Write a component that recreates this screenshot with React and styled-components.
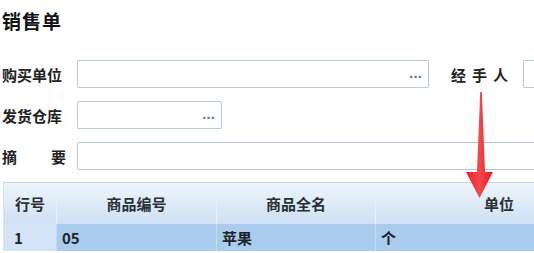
import React from "react";
import styled, { createGlobalStyle } from "styled-components";

const GlobalStyle = createGlobalStyle`
  html, body {
    margin: 0;
    padding: 0;
    background: #ffffff;
    overflow: hidden;
  }
  body {
    font-family: "Noto Sans CJK SC", "Noto Sans", sans-serif;
    color: #1f1f1f;
  }
`;

const Page = styled.div`
  position: relative;
  width: 534px;
  height: 253px;
  padding: 9px 0 0 2px;
  box-sizing: border-box;
  overflow: hidden;
`;

const Title = styled.h1`
  margin: 0;
  font-size: 19px;
  line-height: 24px;
  font-weight: 700;
  letter-spacing: 1px;
  color: #111;
`;

const Form = styled.div`
  margin-top: 27px;
  display: flex;
  flex-direction: column;
  gap: 13px;
`;

const Row = styled.div`
  display: flex;
  align-items: center;
  height: 28px;
  white-space: nowrap;
`;

const Label = styled.div`
  width: 64px;
  margin-right: 11px;
  font-size: 15px;
  font-weight: 700;
  color: #222;
  display: flex;
  justify-content: ${(p) => (p.$spread ? "space-between" : "flex-start")};
  flex-shrink: 0;
`;

const SideLabel = styled.div`
  margin: 0 9px 0 22px;
  font-size: 15px;
  font-weight: 700;
  letter-spacing: 6px;
  color: #222;
  flex-shrink: 0;
`;

const Field = styled.div`
  width: ${(p) => p.$w}px;
  height: 28px;
  box-sizing: border-box;
  border: 1px solid #b3c8d6;
  border-radius: 2px;
  background: #fff;
  display: flex;
  align-items: center;
  justify-content: flex-end;
  padding-right: 6px;
  flex-shrink: 0;
`;

const Dots = styled.span`
  font-family: "DejaVu Sans", sans-serif;
  font-size: 13px;
  font-weight: 700;
  color: #5b7fa6;
  line-height: 1;
  margin-bottom: 1px;
`;

const Table = styled.div`
  margin-top: 12px;
  margin-left: 1px;
  width: 620px;
  border-top: 1px solid #c9d4dd;
  display: grid;
  grid-template-columns: 54px 160px 159px 247px;
`;

const HeadCell = styled.div`
  height: 41px;
  display: flex;
  align-items: center;
  justify-content: center;
  font-size: 15px;
  font-weight: 700;
  color: #2a2f36;
  background: linear-gradient(#eef5fc, #cde0f2);
  border-right: 1px solid #e8f1fa;
  border-left: ${(p) => (p.$first ? "1px solid #d6e3ef" : "none")};
  box-sizing: border-box;
`;

const Cell = styled.div`
  height: 27px;
  display: flex;
  align-items: center;
  padding-left: ${(p) => (p.$first ? 10 : 5)}px;
  font-size: 15px;
  font-weight: 700;
  color: #1d2228;
  background: ${(p) => (p.$first ? "#d2e4f5" : "#aacdee")};
  border-right: 1px solid #c4dcf2;
  border-left: ${(p) => (p.$first ? "1px solid #d6e3ef" : "none")};
  box-sizing: border-box;
`;

const Arrow = styled.svg`
  position: absolute;
  left: 462px;
  top: 88px;
`;

export default function App() {
  return (
    <>
      <GlobalStyle />
      <Page>
        <Title>销售单</Title>
        <Form>
          <Row>
            <Label>购买单位</Label>
            <Field $w={352}>
              <Dots>…</Dots>
            </Field>
            <SideLabel>经手人</SideLabel>
            <Field $w={60} />
          </Row>
          <Row>
            <Label>发货仓库</Label>
            <Field $w={145}>
              <Dots>…</Dots>
            </Field>
          </Row>
          <Row>
            <Label $spread>
              <span>摘</span>
              <span>要</span>
            </Label>
            <Field $w={500} />
          </Row>
        </Form>
        <Table>
          <HeadCell $first>行号</HeadCell>
          <HeadCell>商品编号</HeadCell>
          <HeadCell>商品全名</HeadCell>
          <HeadCell>单位</HeadCell>
          <Cell $first>1</Cell>
          <Cell>05</Cell>
          <Cell>苹果</Cell>
          <Cell>个</Cell>
        </Table>
        <Arrow width="34" height="114" viewBox="0 0 34 114">
          <defs>
            <linearGradient id="red" x1="0" y1="0" x2="1" y2="0">
              <stop offset="0" stopColor="#e3242b" />
              <stop offset="0.5" stopColor="#f5474a" />
              <stop offset="1" stopColor="#d91c22" />
            </linearGradient>
          </defs>
          <path
            d="M18.2 4 L19.9 4 L23 84 L31 84 L17.5 110 L4 84 L15 84 Z"
            fill="url(#red)"
          />
        </Arrow>
      </Page>
    </>
  );
}
